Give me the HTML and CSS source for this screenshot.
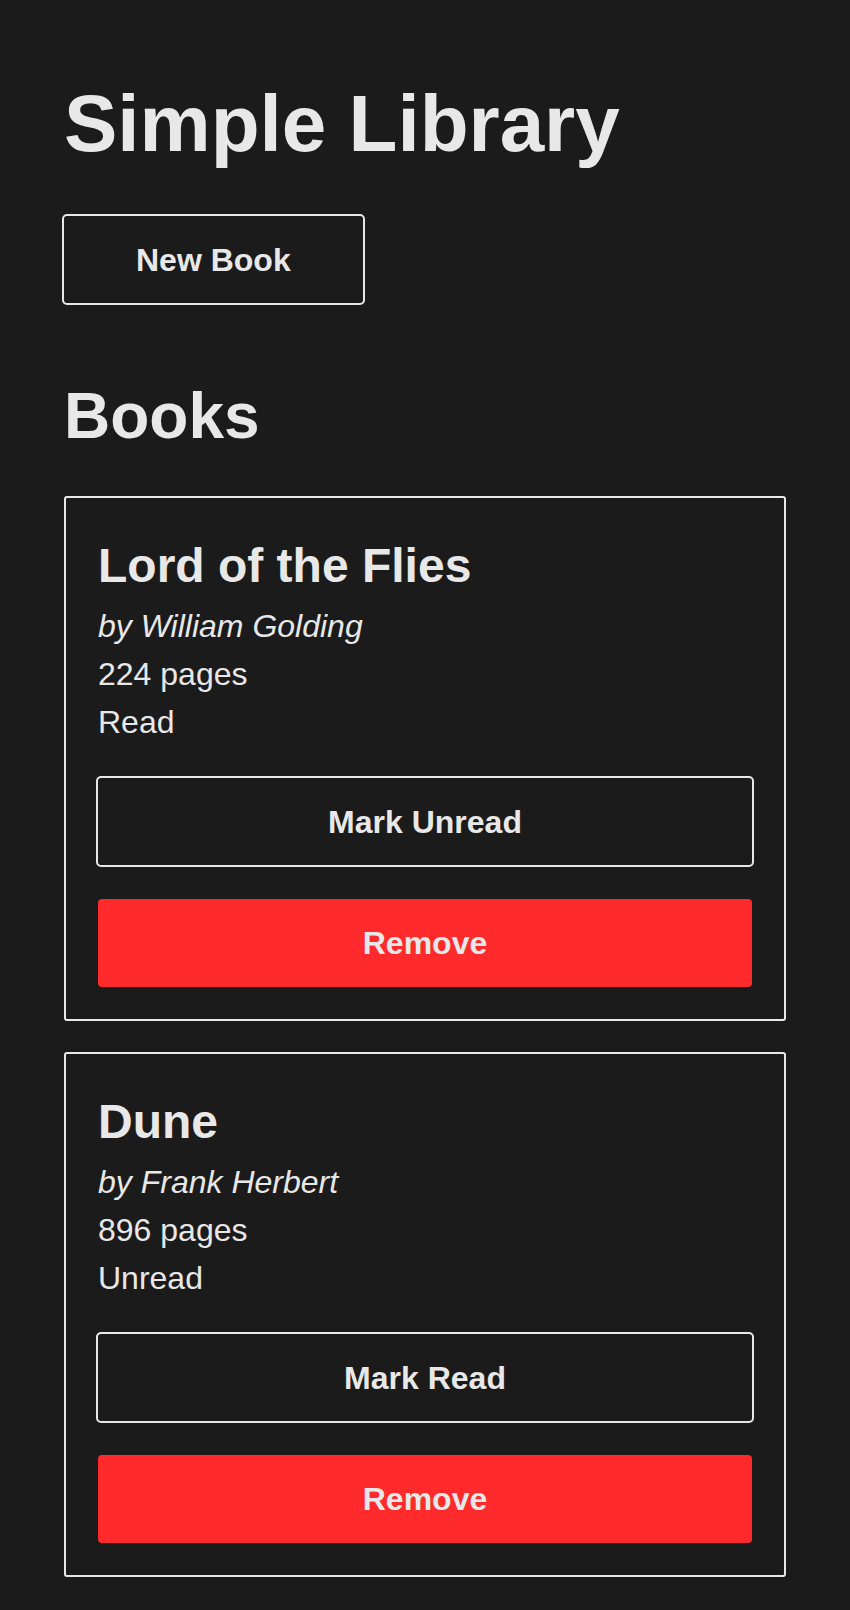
FILE: index.html
```html
<!DOCTYPE html>
<html lang="en">
<head>
<meta charset="utf-8">
<title>Simple Library</title>
<link rel="stylesheet" href="styles.css">
</head>
<body>
<main class="page">
  <h1 class="page-title">Simple Library</h1>
  <button class="btn btn-outline btn-new">New Book</button>
  <h2 class="section-title">Books</h2>
  <div class="book-list">
    <article class="book-card">
      <h3 class="book-title">Lord of the Flies</h3>
      <p class="book-author">by William Golding</p>
      <p class="book-meta">224 pages</p>
      <p class="book-meta">Read</p>
      <div class="book-actions">
        <button class="btn btn-outline btn-toggle">Mark Unread</button>
        <button class="btn btn-danger">Remove</button>
      </div>
    </article>
    <article class="book-card">
      <h3 class="book-title">Dune</h3>
      <p class="book-author">by Frank Herbert</p>
      <p class="book-meta">896 pages</p>
      <p class="book-meta">Unread</p>
      <div class="book-actions">
        <button class="btn btn-outline btn-toggle">Mark Read</button>
        <button class="btn btn-danger">Remove</button>
      </div>
    </article>
  </div>
</main>
</body>
</html>
```

FILE: styles.css
```css
* {
  box-sizing: border-box;
}

body {
  margin: 0;
  background: #1b1b1b;
  color: #e8e8e8;
  font-family: "Liberation Sans", Arial, Helvetica, sans-serif;
  font-size: 32px;
  line-height: 1.5;
}

.page {
  padding: 64px;
  display: flex;
  flex-direction: column;
  align-items: flex-start;
}

.page-title {
  margin: 0;
  font-size: 80px;
  font-weight: 700;
  line-height: 1.5;
}

.section-title {
  margin: 63px 0 32px;
  font-size: 64px;
  font-weight: 700;
  line-height: 1.5;
}

.book-list {
  align-self: stretch;
  display: flex;
  flex-direction: column;
  gap: 31px;
}

.book-card {
  border: 2px solid #e8e8e8;
  border-radius: 3px;
  padding: 32px;
  display: flex;
  flex-direction: column;
}

.book-title {
  margin: 0;
  font-size: 48px;
  font-weight: 700;
  line-height: 1.5;
}

.book-author,
.book-meta {
  margin: 0;
}

.book-author {
  font-style: italic;
}

.book-actions {
  margin-top: 30px;
  display: flex;
  flex-direction: column;
  gap: 32px;
}

.btn {
  font-family: "Liberation Sans", Arial, Helvetica, sans-serif;
  font-size: 32px;
  font-weight: 700;
  line-height: 1.5;
  color: #e8e8e8;
  cursor: pointer;
}

.btn-outline {
  background: transparent;
  border: 2px solid #e8e8e8;
  border-radius: 5px;
}

.btn-new {
  margin: 30px -2px 0;
  padding: 20px 72px 19px;
}

.btn-toggle {
  margin: 0 -2px;
  padding: 20px 0 19px;
}

.btn-danger {
  background: #ff2a2b;
  border: none;
  border-radius: 4px;
  padding: 20px 0;
}
```
